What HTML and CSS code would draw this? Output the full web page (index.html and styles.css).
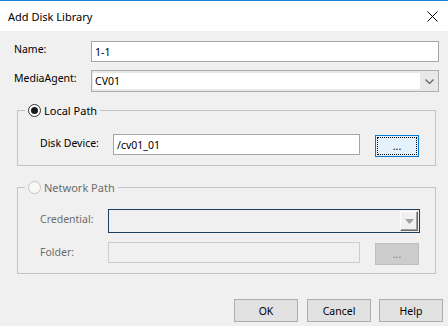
FILE: index.html
```html
<!DOCTYPE html>
<html lang="en">
<head>
  <meta charset="UTF-8">
  <title>Add Disk Library</title>
  <link rel="stylesheet" href="styles.css">
</head>
<body>
  <div class="dialog">
    <div class="titlebar">
      <span class="title">Add Disk Library</span>
      <svg class="close" width="11" height="11" viewBox="0 0 11 11">
        <line x1="0.5" y1="0.5" x2="10.5" y2="10.5" stroke="#000" stroke-width="1"></line>
        <line x1="10.5" y1="0.5" x2="0.5" y2="10.5" stroke="#000" stroke-width="1"></line>
      </svg>
    </div>

    <div class="content">
      <div class="row row-name">
        <span class="label label-top">Name:</span>
        <div class="textbox name-box">1-1</div>
      </div>

      <div class="row row-agent">
        <span class="label label-top">MediaAgent:</span>
        <div class="combo">
          <span class="combo-edit">CV01</span>
          <span class="combo-drop">
            <svg width="9" height="5" viewBox="0 0 9 5">
              <polyline points="0.5,0.5 4.5,4.5 8.5,0.5" fill="none" stroke="#606060" stroke-width="1.2"></polyline>
            </svg>
          </span>
        </div>
      </div>

      <div class="group group-local">
        <div class="group-head">
          <span class="radio checked"></span>
          <span>Local Path</span>
        </div>
        <div class="row row-disk">
          <span class="label sub-label">Disk Device:</span>
          <div class="textbox disk-box">/cv01_01</div>
          <button class="btn browse focused"><span class="focus-ring">...</span></button>
        </div>
      </div>

      <div class="group group-network">
        <div class="group-head disabled">
          <span class="radio"></span>
          <span>Network Path</span>
        </div>
        <div class="row row-cred">
          <span class="label sub-label disabled">Credential:</span>
          <div class="classic-combo">
            <span class="classic-drop">
              <svg width="9" height="5" viewBox="0 0 9 5">
                <polygon points="0,0 9,0 4.5,5" fill="#a0a0a0"></polygon>
              </svg>
            </span>
          </div>
        </div>
        <div class="row row-folder">
          <span class="label sub-label disabled">Folder:</span>
          <div class="textbox folder-box"></div>
          <button class="btn browse off">...</button>
        </div>
      </div>

      <div class="actions">
        <button class="btn action">OK</button>
        <button class="btn action">Cancel</button>
        <button class="btn action">Help</button>
      </div>
    </div>
  </div>
</body>
</html>
```

FILE: styles.css
```css
body {
  margin: 0;
  background-color: #f0f0f0;
  font-family: "Noto Sans", "Open Sans", sans-serif;
  font-size: 10.5px;
  color: #000;
}

.dialog {
  width: 448px;
  height: 326px;
  overflow: hidden;
}

.titlebar {
  height: 30px;
  border-top: 1px solid #1883d7;
  background-color: #fff;
  display: flex;
  align-items: center;
  justify-content: space-between;
  padding: 0 10px 0 8px;
}

.title {
  font-size: 11px;
  margin-top: 1px;
}

.close {
  display: block;
  margin-top: 1px;
}

.content {
  padding: 10px 0 0 14px;
}

.row {
  display: flex;
  align-items: center;
}

.label {
  flex: none;
}

.label-top {
  align-self: flex-start;
  padding-top: 1px;
}

.row-name .label,
.row-agent .label {
  width: 77px;
}

.textbox {
  box-sizing: border-box;
  height: 21px;
  border: 1px solid #a5a5a5;
  background-color: #fff;
  padding: 2px 3px 0;
  line-height: 16px;
}

.name-box {
  width: 348px;
}

.row-agent {
  margin-top: 8px;
}

.combo {
  box-sizing: border-box;
  width: 348px;
  height: 22px;
  border: 1px solid #adadad;
  background-color: #e8e8e8;
  display: flex;
}

.combo-edit {
  flex: 1;
  background-color: #fff;
  margin: 2px 0 2px 1px;
  padding: 1px 2px 0;
  line-height: 15px;
}

.combo-drop {
  width: 18px;
  display: flex;
  align-items: center;
  justify-content: center;
}

.combo-drop svg {
  display: block;
  margin-left: 1px;
}

.group {
  box-sizing: border-box;
  width: 419px;
  margin-left: 3px;
  border: 1px solid #c4c4c4;
}

.group-local {
  margin-top: 18px;
  height: 56px;
}

.group-network {
  margin-top: 21px;
  height: 87px;
}

.group-head {
  display: flex;
  align-items: center;
  gap: 3px;
  width: fit-content;
  height: 13px;
  margin: -7px 0 0 7px;
  padding: 0 3px;
  background-color: #f0f0f0;
  font-size: 11px;
}

.radio {
  box-sizing: border-box;
  width: 13px;
  height: 13px;
  border: 1px solid #333;
  border-radius: 50%;
  background-color: #fff;
  display: flex;
  align-items: center;
  justify-content: center;
}

.radio.checked::after {
  content: "";
  width: 7px;
  height: 7px;
  border-radius: 50%;
  background-color: #1a1a1a;
}

.group-head.disabled {
  color: #6d6d6d;
}

.group-head.disabled .radio {
  border-color: #c6c6c6;
  background-color: #f8f8f8;
}

.disabled {
  color: #6d6d6d;
}

.sub-label {
  margin-left: 22px;
}

.row-disk {
  margin-top: 17px;
  height: 22px;
  align-items: flex-start;
}

.row-disk .sub-label {
  width: 73px;
  padding-top: 2px;
}

.disk-box {
  width: 247px;
}

.btn {
  box-sizing: border-box;
  font-family: inherit;
  font-size: 10.5px;
  color: #000;
  border: 1px solid #adadad;
  background-color: #e1e1e1;
  padding: 0;
}

.browse {
  width: 44px;
  height: 22px;
  margin-left: 15px;
  margin-top: 1px;
}

.browse.focused {
  border-color: #0078d7;
  background-color: #e5f1fb;
  padding: 1px;
  display: flex;
}

.focus-ring {
  flex: 1;
  border: 1px dotted #000;
  line-height: 16px;
  text-align: center;
}

.browse.off {
  background-color: #cccccc;
  border-color: #bfbfbf;
  color: #838383;
}

.row-cred {
  margin-top: 15px;
  height: 24px;
}

.row-cred .sub-label,
.row-folder .sub-label {
  width: 68px;
  align-self: flex-start;
  padding-top: 3px;
}

.classic-combo {
  box-sizing: border-box;
  width: 312px;
  height: 24px;
  border: 1px solid #1f3e5e;
  background-color: #f0f0f0;
  display: flex;
  justify-content: flex-end;
  padding: 1px;
}

.classic-drop {
  box-sizing: border-box;
  width: 18px;
  border-top: 1px solid #fff;
  border-left: 1px solid #fff;
  border-right: 1px solid #696969;
  border-bottom: 1px solid #696969;
  box-shadow: inset -1px -1px 0 #a0a0a0;
  display: flex;
  align-items: center;
  justify-content: center;
}

.classic-drop svg {
  display: block;
}

.row-folder {
  margin-top: 9px;
  height: 22px;
  align-items: flex-start;
}

.folder-box {
  width: 252px;
  background-color: #f0f0f0;
  border-color: #cccccc;
}

.actions {
  display: flex;
  justify-content: flex-end;
  gap: 9px;
  margin-top: 25px;
  padding-right: 5px;
}

.action {
  width: 64px;
  height: 23px;
}

.action:last-child {
  margin-left: -1px;
}
```
